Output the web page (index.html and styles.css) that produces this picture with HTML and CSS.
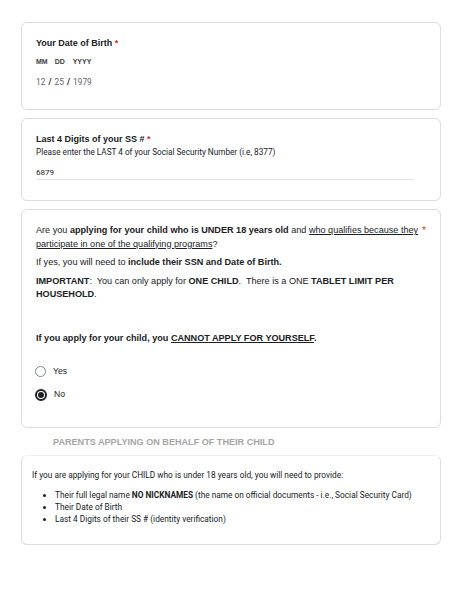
FILE: index.html
```html
<!DOCTYPE html>
<html lang="en">
<head>
    <meta charset="UTF-8">
    <meta name="viewport" content="width=device-width, initial-scale=1.0">
    <title>Tablet Application</title>
    <link rel="stylesheet" href="styles.css">
</head>
<body>
    <main class="form">

        <section class="card">
            <div class="q-title">Your Date of Birth <span class="req">*</span></div>
            <div class="date-labels">
                <span class="mm">MM</span>
                <span class="dd">DD</span>
                <span class="yy">YYYY</span>
            </div>
            <div class="date-value">12 <b>/</b> 25 <b>/</b> 1979</div>
        </section>

        <section class="card card-ssn">
            <div class="q-title">Last 4 Digits of your SS # <span class="req">*</span></div>
            <div class="q-help">Please enter the LAST 4 of your Social Security Number (i.e, 8377)</div>
            <div class="text-answer">6879</div>
        </section>

        <section class="card card-child">
            <div class="q-row">
                <p class="q-text">Are you <b>applying for your child who is UNDER 18 years old</b> and <u>who qualifies because they participate in one of the qualifying programs</u>?</p>
                <span class="req req-side">*</span>
            </div>
            <p class="q-text">If yes, you will need to <b>include their SSN and Date of Birth.</b></p>
            <p class="q-text"><b>IMPORTANT</b>:&nbsp; You can only apply for <b>ONE CHILD</b>.&nbsp; There is a ONE <b>TABLET LIMIT PER HOUSEHOLD</b>.</p>
            <p class="q-text q-last"><b>If you apply for your child, you <u>CANNOT APPLY FOR YOURSELF</u>.</b></p>

            <div class="options">
                <label class="option">
                    <span class="radio"></span>
                    <span>Yes</span>
                </label>
                <label class="option">
                    <span class="radio checked"></span>
                    <span>No</span>
                </label>
            </div>
        </section>

        <h2 class="section-head">PARENTS APPLYING ON BEHALF OF THEIR CHILD</h2>

        <section class="card card-info">
            <p>If you are applying for your CHILD who is under 18 years old, you will need to provide:</p>
            <ul>
                <li>Their full legal name <b>NO NICKNAMES</b> (the name on official documents - i.e., Social Security Card)</li>
                <li>Their Date of Birth</li>
                <li>Last 4 Digits of their SS # (identity verification)</li>
            </ul>
        </section>

    </main>
</body>
</html>
```

FILE: styles.css
```css
/* General Styles */
body {
    margin: 0;
    padding: 22px 21px;
    background-color: #ffffff;
    color: #202124;
    font-family: "Liberation Sans", Arial, sans-serif;
}

.form {
    width: 420px;
}

.card {
    border: 1px solid #dadce0;
    border-radius: 6px;
    padding: 14px 14px 22px;
    margin-bottom: 8px;
    box-sizing: border-box;
}

.q-title {
    font-size: 9px;
    font-weight: bold;
    line-height: 12px;
}

.req {
    color: #d93025;
}

.date-labels {
    margin-top: 8px;
    font-size: 7px;
    font-weight: bold;
    line-height: 9px;
    color: #3c4043;
}

.date-labels .dd {
    margin-left: 5px;
}

.date-labels .yy {
    margin-left: 6px;
}

.date-value {
    margin-top: 11px;
    font-family: Roboto, sans-serif;
    font-size: 8.3px;
    line-height: 10px;
    color: #5f6368;
}

.date-value b {
    margin: 0 1px;
    color: #202124;
}

/* SSN */
.card-ssn {
    padding-bottom: 20px;
}

.q-help {
    margin-top: 2px;
    font-family: Roboto, sans-serif;
    font-size: 8.2px;
    line-height: 10px;
}

.text-answer {
    margin-top: 11px;
    margin-right: 12px;
    padding-bottom: 2px;
    border-bottom: 1px solid #e3e4e6;
    font-family: Roboto, sans-serif;
    font-size: 8px;
    line-height: 9px;
}

/* Child question */
.card-child {
    padding-top: 14px;
    padding-bottom: 26px;
}

.q-row {
    display: flex;
    gap: 4px;
}

.q-row .q-text {
    flex: 1;
}

.req-side {
    font-size: 10px;
    line-height: 14px;
}

.q-text {
    margin: 0 0 5px;
    font-size: 9.1px;
    line-height: 13.5px;
}

.q-text u {
    text-underline-offset: 1px;
}

.q-last {
    margin-top: 30px;
}

.options {
    margin-top: 20px;
    display: flex;
    flex-direction: column;
    gap: 10px;
}

.option {
    display: flex;
    align-items: center;
    gap: 7px;
    margin-left: -1px;
    font-size: 8.6px;
    line-height: 13px;
}

.radio {
    width: 9px;
    height: 9px;
    border: 1.5px solid #80868b;
    border-radius: 50%;
    display: flex;
    align-items: center;
    justify-content: center;
}

.radio.checked {
    border: 2px solid #202124;
    width: 8px;
    height: 8px;
}

.radio.checked::after {
    content: "";
    width: 6px;
    height: 6px;
    border-radius: 50%;
    background: #202124;
}

/* Section header */
.section-head {
    margin: 0 0 7px 32px;
    font-size: 9.1px;
    font-weight: bold;
    line-height: 12px;
    color: #a5a5a5;
}

/* Info card */
.card-info {
    border-top-color: #f1f1f1;
    padding: 13px 10px 19px;
    font-family: Roboto, sans-serif;
    font-size: 8.3px;
    line-height: 12px;
}

.card-info p {
    margin: 0 0 8px;
}

.card-info ul {
    margin: 0;
    padding-left: 23px;
}
```
